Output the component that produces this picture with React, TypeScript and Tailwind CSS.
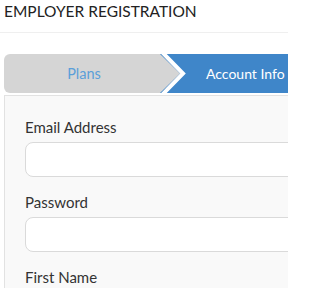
export default function App() {
  return (
    <div className="w-[288px] h-[288px] overflow-hidden bg-white font-['Lato',sans-serif]">
      <div className="w-[340px] pl-1">
        {/* Title */}
        <h1 className="pt-[1px] text-[15.5px] leading-[20px] text-[#222] uppercase">
          Employer Registration
        </h1>
        <div className="mt-[11px] -ml-1 h-px bg-[#efefef]" />

        {/* Steps */}
        <div className="mt-[21px] relative flex h-[39px]">
          <div className="w-[156px] bg-[#d5d5d5] rounded-l-md flex items-center justify-center pl-[4px] text-[14.5px] text-[#5b9fd9]">
            Plans
          </div>
          <div className="flex-1 bg-[#3f86c9] flex items-center pl-[46px] text-[14px] text-white">
            Account Info
          </div>
          <svg className="absolute left-[156px] top-0" width="30" height="39" viewBox="0 0 30 39">
            <polygon points="0,0 20,19.5 0,39" fill="#d5d5d5" />
            <polyline points="1,-3 23,19.5 1,42" fill="none" stroke="#fff" strokeWidth="4" />
          </svg>
        </div>

        {/* Form card */}
        <div className="mt-[2px] border border-[#e2e2e2] bg-[#f9f9f9] pl-5 pr-5 pt-[20px] pb-6">
          <label className="block text-[15px] leading-[22px] text-[#333]">Email Address</label>
          <input className="mt-[4px] block w-full h-[35px] rounded-lg border border-[#dadada] bg-white" />
          <label className="mt-[14px] block text-[15px] leading-[22px] text-[#333]">Password</label>
          <input type="password" className="mt-[4px] block w-full h-[35px] rounded-lg border border-[#dadada] bg-white" />
          <label className="mt-[14px] block text-[15px] leading-[22px] text-[#333]">First Name</label>
          <input className="mt-[4px] block w-full h-[35px] rounded-lg border border-[#dadada] bg-white" />
        </div>
      </div>
    </div>
  );
}
